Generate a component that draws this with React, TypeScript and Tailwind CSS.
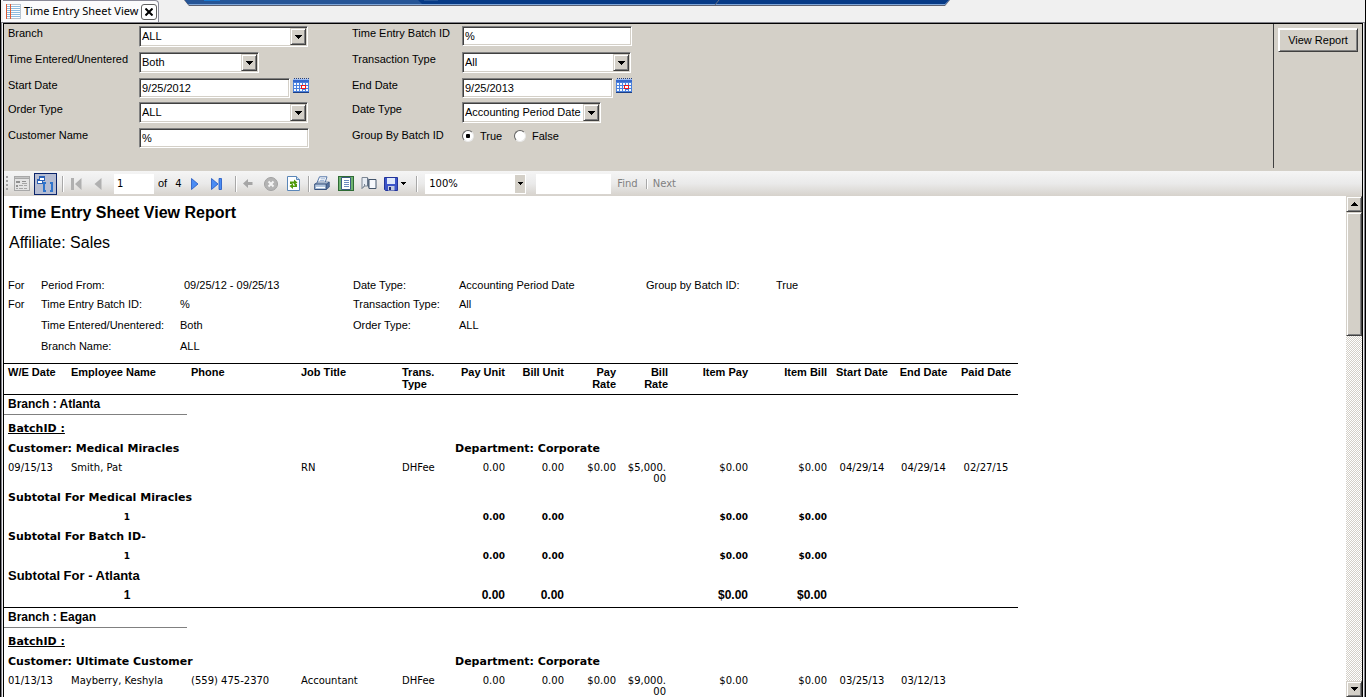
import { Fragment, useState } from 'react';
import type { ReactNode } from 'react';

// Classic raised / sunken 3D edges
const sunken =
  'border border-t-[#808080] border-l-[#808080] border-r-white border-b-white bg-white shadow-[inset_1px_1px_0_#404040,inset_-1px_-1px_0_#d4d0c8]';
const raised =
  'border border-t-[#d4d0c8] border-l-[#d4d0c8] border-r-[#404040] border-b-[#404040] bg-[#d4d0c8] shadow-[inset_1px_1px_0_#fff,inset_-1px_-1px_0_#808080]';

type Row = {
  date: string;
  name: string;
  phone: string;
  title: string;
  type: string;
  payUnit: string;
  billUnit: string;
  payRate: string;
  billRate: string;
  itemPay: string;
  itemBill: string;
  start: string;
  end: string;
  paid: string;
};

type Branch = {
  name: string;
  customer: string;
  department: string;
  rows: Row[];
  totals?: { count: number; units: string; amount: string };
};

const branches: Branch[] = [
  {
    name: 'Atlanta',
    customer: 'Medical Miracles',
    department: 'Corporate',
    rows: [
      {
        date: '09/15/13', name: 'Smith, Pat', phone: '', title: 'RN', type: 'DHFee',
        payUnit: '0.00', billUnit: '0.00', payRate: '$0.00', billRate: '$5,000.00',
        itemPay: '$0.00', itemBill: '$0.00', start: '04/29/14', end: '04/29/14', paid: '02/27/15',
      },
    ],
    totals: { count: 1, units: '0.00', amount: '$0.00' },
  },
  {
    name: 'Eagan',
    customer: 'Ultimate Customer',
    department: 'Corporate',
    rows: [
      {
        date: '01/13/13', name: 'Mayberry, Keshyla', phone: '(559) 475-2370', title: 'Accountant', type: 'DHFee',
        payUnit: '0.00', billUnit: '0.00', payRate: '$0.00', billRate: '$9,000.00',
        itemPay: '$0.00', itemBill: '$0.00', start: '03/25/13', end: '03/12/13', paid: '',
      },
    ],
  },
];

function Arrow({ up = false }: { up?: boolean }) {
  return (
    <svg width="7" height="4" viewBox="0 0 7 4" shapeRendering="crispEdges" aria-hidden="true">
      <path d={up ? 'M3 0h1v1h1v1h1v1h1v1H0V3h1V2h1V1h1z' : 'M0 0h7v1H6v1H5v1H4v1H3V3H2V2H1V1H0z'} fill="#000" />
    </svg>
  );
}

function Field({ id, label, children }: { id: string; label: string; children: ReactNode }) {
  return (
    <>
      <label htmlFor={id} className="leading-[14px]">{label}</label>
      <div className="flex items-start gap-[3px]">{children}</div>
    </>
  );
}

function Select({ id, options, width }: { id: string; options: string[]; width: string }) {
  return (
    <div className={`relative h-[21px] ${width} ${sunken}`}>
      <select id={id} className="h-full w-full appearance-none bg-transparent pl-0.5 pr-4 outline-none">
        {options.map((o) => (
          <option key={o}>{o}</option>
        ))}
      </select>
      <span className={`pointer-events-none absolute top-px right-px bottom-px flex w-4 items-center justify-center ${raised}`}>
        <Arrow />
      </span>
    </div>
  );
}

function TextBox({ id, value, width }: { id: string; value: string; width: string }) {
  return <input id={id} type="text" defaultValue={value} className={`h-5 pl-0.5 outline-none ${width} ${sunken}`} />;
}

function CalendarButton({ label }: { label: string }) {
  return (
    <button type="button" aria-label={label}>
      <svg width="16" height="15" viewBox="0 0 16 15" shapeRendering="crispEdges">
        <rect y="1" width="16" height="14" fill="#4a80dc" />
        <path d="M1 0h1v1H1zM3 0h1v1H3zM5 0h1v1H5zM7 0h1v1H7zM9 0h1v1H9zM11 0h1v1h-1zM13 0h1v1h-1zM15 0h1v1h-1z" fill="#26407c" />
        <rect y="1" width="16" height="1" fill="#9dbdf4" />
        <rect y="2" width="16" height="2" fill="#3568cc" />
        <path
          d="M1 5h2v2H1zM4 5h2v2H4zM7 5h2v2H7zM10 5h2v2h-2zM13 5h2v2h-2zM1 8h2v2H1zM4 8h2v2H4zM7 8h1v2H7zM13 8h2v2h-2zM1 11h2v2H1zM4 11h2v2H4zM7 11h2v2H7zM10 12h2v1h-2zM13 11h2v2h-2z"
          fill="#f4f9ff"
        />
        <path d="M8 7h5v4H8z" fill="#f01818" />
        <path d="M9 8h3v2H9z" fill="#fff" />
        <path d="M0 14h16v1H0z" fill="#1c3f86" />
      </svg>
    </button>
  );
}

function Tab() {
  return (
    <div className="flex h-full w-[156px] items-center rounded-tr border-t border-r border-[#8a8a98] bg-[#fbfbfc] pl-[3px]">
      <svg width="15" height="15" viewBox="0 0 15 15" shapeRendering="crispEdges" aria-hidden="true">
        <rect width="15" height="15" fill="#fff" />
        <path
          d="M0 2h15v1H0zM0 4h15v1H0zM0 6h15v1H0zM0 8h15v1H0zM0 10h15v1H0zM0 12h15v1H0z"
          fill="#8dbce0"
        />
        <path d="M0 0h15v1H0zM0 14h15v1H0zM14 0h1v15h-1z" fill="#b8c4d0" />
        <path d="M0 0h1v15H0zM4 0h1v15H4z" fill="#dd5a34" />
      </svg>
      <span className="ml-[3px] font-['Noto_Sans',sans-serif] text-[11px] whitespace-nowrap">Time Entry Sheet View</span>
      <button
        type="button"
        aria-label="Close tab"
        className="ml-[3px] flex size-4 shrink-0 items-center justify-center rounded-[3px] border border-[#606060] bg-white"
      >
        <svg width="8" height="8" viewBox="0 0 8 8">
          <path d="M.5.5l7 7M7.5.5l-7 7" stroke="#000" strokeWidth="2" />
        </svg>
      </button>
    </div>
  );
}

function TopStrip() {
  return (
    <svg width="766" height="6" viewBox="0 0 766 6" className="ml-[25px] self-start" aria-hidden="true">
      <path d="M0 0h766l-5 6H5z" fill="#5a5f70" />
      <path d="M1 0h764l-4 5H5z" fill="#7fa6d8" />
      <path d="M1 0h764l-4 4H4z" fill="#063a86" />
      <path d="M1 0h233l4 4H4z" fill="#265596" />
      <path d="M20 0h16v1H20z" fill="#1a78d0" />
      <path d="M240 0h14v1h-14z" fill="#265596" />
      <path d="M535 0l-4 5" stroke="#6a7080" />
    </svg>
  );
}

function Parameters() {
  const [grouped, setGrouped] = useState(true);
  return (
    <form className="flex h-[147px] bg-[#d4d0c8]" onSubmit={(e) => e.preventDefault()}>
      <div className="grid flex-1 auto-rows-min grid-cols-[131px_213px_110px_1fr] grid-rows-[26px_26px_24px_26px_20px] pt-0.5 pl-1">
        <Field id="branch" label="Branch">
          <Select id="branch" options={['ALL']} width="w-[169px]" />
        </Field>
        <Field id="batch" label="Time Entry Batch ID">
          <TextBox id="batch" value="%" width="w-[170px]" />
        </Field>
        <Field id="entered" label="Time Entered/Unentered">
          <Select id="entered" options={['Both']} width="w-[120px]" />
        </Field>
        <Field id="trans" label="Transaction Type">
          <Select id="trans" options={['All']} width="w-[169px]" />
        </Field>
        <Field id="start" label="Start Date">
          <TextBox id="start" value="9/25/2012" width="w-[151px]" />
          <CalendarButton label="Pick start date" />
        </Field>
        <Field id="end" label="End Date">
          <TextBox id="end" value="9/25/2013" width="w-[151px]" />
          <CalendarButton label="Pick end date" />
        </Field>
        <Field id="order" label="Order Type">
          <Select id="order" options={['ALL']} width="w-[169px]" />
        </Field>
        <Field id="datetype" label="Date Type">
          <Select id="datetype" options={['Accounting Period Date']} width="w-[139px]" />
        </Field>
        <Field id="customer" label="Customer Name">
          <TextBox id="customer" value="%" width="w-[170px]" />
        </Field>
        <Field id="group-true" label="Group By Batch ID">
          {[true, false].map((value) => (
            <label key={String(value)} className="flex w-[49px] items-center gap-1.5">
              <input
                id={value ? 'group-true' : 'group-false'}
                type="radio"
                name="group"
                checked={grouped === value}
                onChange={() => setGrouped(value)}
                className="size-3 shrink-0 appearance-none rounded-full border border-t-[#606060] border-r-[#e8e8e8] border-b-[#e8e8e8] border-l-[#606060] bg-white checked:bg-[radial-gradient(circle,#000_2px,#fff_2.5px)]"
              />
              {value ? 'True' : 'False'}
            </label>
          ))}
        </Field>
      </div>
      <div className="mb-[3px] border-l border-[#404040] pt-1 pr-1 pl-1">
        <button type="submit" className={`h-6 w-20 ${raised} border-t-white border-l-white`}>
          View Report
        </button>
      </div>
    </form>
  );
}

function Separator() {
  return <span className="h-4 w-0.5 shrink-0 border-l border-[#a8a8a8] bg-white" />;
}

function ToolButton({ label, className = '', children }: { label: string; className?: string; children: ReactNode }) {
  return (
    <button type="button" aria-label={label} className={`flex shrink-0 items-center justify-center ${className}`}>
      {children}
    </button>
  );
}

function Toolbar() {
  return (
    <div className="flex h-[25px] items-center bg-linear-to-b from-[#f5f5f5] via-[#eaeaea] to-[#d6d2cc] pl-0.5 font-['DejaVu_Sans','Liberation_Sans',sans-serif] text-[10px]">
      <svg width="3" height="15" viewBox="0 0 3 15" shapeRendering="crispEdges" aria-hidden="true">
        <path d="M0 0h2v2H0zM0 4h2v2H0zM0 8h2v2H0zM0 12h2v2H0z" fill="#a4a4a4" />
      </svg>

      <ToolButton label="Show or hide parameters" className="ml-[5px]">
        <svg width="16" height="15" viewBox="0 0 16 15" shapeRendering="crispEdges">
          <path d="M0 0h16v15H0z" fill="#a8a8a8" />
          <path d="M1 3h14v11H1z" fill="#e4e4e4" />
          <path d="M1 1h14v1H1z" fill="#c4c4c4" />
          <path d="M2 5h4v2H2zM2 9h2v2H2zM8 5h4v1H8z" fill="#909090" />
          <path d="M5 9h4v1H5zM10 9h3v1h-3zM5 12h4v1H5zM10 12h3v1h-3zM2 12h2v1H2zM8 7h5v1H8z" fill="#a6a6a6" />
        </svg>
      </ToolButton>
      <ToolButton label="Document map" className="ml-1 h-[22px] w-[23px] border border-[#0a246a] bg-[#b6bdd2]">
        <svg width="17" height="16" viewBox="0 0 17 16" shapeRendering="crispEdges">
          <path d="M2 0h6v5H2zM0 3h6v5H0z" fill="#2c62b8" />
          <path d="M3 2h4v2H3zM1 5h4v2H1z" fill="#fff" />
          <path d="M6 6h3v2H8v6h1v2H6zM13 6h3v10h-3v-2h1V8h-1z" fill="#2f74cc" />
        </svg>
      </ToolButton>
      <span className="w-[5px]" />
      <Separator />

      <ToolButton label="First page" className="ml-[7px]">
        <svg width="11" height="12" viewBox="0 0 11 12">
          <path d="M0 0h3v12H0zM10.5 0v12L4 6z" fill="#b0b0b0" />
        </svg>
      </ToolButton>
      <ToolButton label="Previous page" className="ml-3">
        <svg width="8" height="12" viewBox="0 0 8 12">
          <path d="M7.5 0v12L.5 6z" fill="#b0b0b0" />
        </svg>
      </ToolButton>
      <input aria-label="Current page" defaultValue="1" className="ml-3 h-5 w-10 bg-white pl-[3px] outline-none" />
      <span className="ml-1 font-['Liberation_Sans',sans-serif] text-[11px]">of</span>
      <span className="ml-2 w-2">4</span>
      <ToolButton label="Next page" className="ml-2">
        <svg width="8" height="12" viewBox="0 0 8 12">
          <path d="M.5.5v11L7 6z" fill="#4a8cf4" stroke="#1f56c0" strokeWidth=".8" />
        </svg>
      </ToolButton>
      <ToolButton label="Last page" className="ml-3">
        <svg width="11" height="12" viewBox="0 0 11 12">
          <path d="M.5.5v11L7 6zM8 .5h2.5v11H8z" fill="#4a8cf4" stroke="#1f56c0" strokeWidth=".8" />
        </svg>
      </ToolButton>
      <span className="w-[13px]" />
      <Separator />

      <ToolButton label="Back to parent report" className="ml-1.5">
        <svg width="10" height="9" viewBox="0 0 10 9">
          <path d="M0 4.500L5 0v3h4.500v3H5v3z" fill="#a6a6a6" />
        </svg>
      </ToolButton>
      <ToolButton label="Stop rendering" className="ml-[11px]">
        <svg width="14" height="14" viewBox="0 0 14 14">
          <circle cx="7" cy="7" r="6.5" fill="#b4b4b4" stroke="#a2a2a2" />
          <path d="M4.500 4.500l5 5M9.500 4.500l-5 5" stroke="#f4f4f4" strokeWidth="2" />
        </svg>
      </ToolButton>
      <ToolButton label="Refresh" className="ml-[9px]">
        <svg width="13" height="15" viewBox="0 0 13 15">
          <path d="M.5.5h9l3 3v11H.5z" fill="#fdfeff" stroke="#5a86b8" />
          <path d="M9.500.5v3h3" fill="#c8dcf0" stroke="#5a86b8" />
          <path d="M3 8V5.500h4V3.500L10.500 6.500 7 9V7.500H5V8zM10 8v3H6v2L2.500 10 6 7.500V9.500h2V8z" fill="#4f9a08" />
        </svg>
      </ToolButton>
      <span className="w-2" />
      <Separator />

      <ToolButton label="Print" className="ml-1">
        <svg width="16" height="15" viewBox="0 0 16 15">
          <path d="M5.500.8h7.500l-2 6H3z" fill="#fff" stroke="#5577a8" />
          <path d="M6.500 2.800h4.500M5.800 4.600h4.500" stroke="#9ab2d4" />
          <path d="M1 8l3-2h11l-2 2z" fill="#d8e2ee" stroke="#46618c" strokeWidth=".7" />
          <path d="M.7 8h11.600v5.500H.7z" fill="#b4c8e0" stroke="#36507c" />
          <path d="M12.300 8L15.300 6v5l-3 2.500z" fill="#55719c" stroke="#36507c" strokeWidth=".7" />
          <path d="M2 11.500h9" stroke="#fff" />
        </svg>
      </ToolButton>
      <ToolButton label="Print layout" className="ml-2">
        <svg width="16" height="15" viewBox="0 0 16 15">
          <rect x=".5" y=".5" width="15" height="14" fill="#6fb470" stroke="#2e6b34" />
          <path d="M3.500 1.500h9v12h-9z" fill="#fff" stroke="#3a5a80" />
          <path d="M6 4.500h5M6 6.500h5M6 8.500h5M6 10.500h5" stroke="#6d8cc0" />
        </svg>
      </ToolButton>
      <ToolButton label="Page setup" className="ml-[7px]">
        <svg width="16" height="13" viewBox="0 0 16 13">
          <path d="M1 .5h5.500v8.500H3.500L1 11.500z" fill="#e8edf4" stroke="#7c8794" />
          <path d="M1 11.500l2.500-2.500v-2" fill="none" stroke="#7c8794" />
          <path d="M8 2.500h7v9H8z" fill="#f6f9fd" stroke="#44566c" />
          <path d="M6.500.5L8 2.500v9L6.500 9z" fill="#56687e" />
        </svg>
      </ToolButton>
      <ToolButton label="Export" className="ml-[7px] gap-[3px]">
        <svg width="14" height="14" viewBox="0 0 14 14">
          <path d="M.5.5h13v13h-12l-1-1z" fill="#3c55c8" stroke="#22349a" />
          <path d="M3 1h8v6H3z" fill="#dfe9fb" />
          <path d="M4 9h6.500v4.500H4z" fill="#c2cbe0" />
          <path d="M5 10h2v3H5z" fill="#1e2c78" />
        </svg>
        <svg width="5" height="3" viewBox="0 0 5 3" shapeRendering="crispEdges">
          <path d="M0 0h5v1H4v1H3v1H2V2H1V1H0z" />
        </svg>
      </ToolButton>
      <span className="w-2.5" />
      <Separator />

      <div className="relative ml-[7px] h-5 w-[101px] bg-white">
        <select aria-label="Zoom" className="h-full w-full appearance-none bg-transparent pl-1 outline-none">
          <option>100%</option>
        </select>
        <span className="pointer-events-none absolute top-px right-px bottom-px flex w-2.5 items-center justify-center bg-[#d4d0c8]">
          <svg width="5" height="3" viewBox="0 0 5 3" shapeRendering="crispEdges">
            <path d="M0 0h5v1H4v1H3v1H2V2H1V1H0z" />
          </svg>
        </span>
      </div>
      <input aria-label="Find text" className="ml-2.5 h-5 w-[75px] bg-white px-1 outline-none" />
      <button type="button" className="mr-2 ml-1.5 text-[#808080]">Find</button>
      <span className="h-2.5 w-0.5 border-l border-[#a8a8a8] bg-white" />
      <button type="button" className="ml-[5px] text-[#808080]">Next</button>
    </div>
  );
}

function Summary() {
  return (
    <div className="grid grid-cols-[33px_139px_173px_106px_187px_130px_1fr] grid-rows-[19px_21px_21px_21px] pt-[23px] pb-[5px] pl-1 leading-[19px]">
      <span>For</span>
      <span>Period From:</span>
      <span className="pl-1">09/25/12 - 09/25/13</span>
      <span>Date Type:</span>
      <span>Accounting Period Date</span>
      <span>Group by Batch ID:</span>
      <span>True</span>

      <span>For</span>
      <span>Time Entry Batch ID:</span>
      <span>%</span>
      <span>Transaction Type:</span>
      <span className="col-span-3">All</span>

      <span className="col-start-2">Time Entered/Unentered:</span>
      <span>Both</span>
      <span>Order Type:</span>
      <span className="col-span-3">ALL</span>

      <span className="col-start-2">Branch Name:</span>
      <span>ALL</span>
    </div>
  );
}

type SubtotalProps = { label: string; totals: NonNullable<Branch['totals']>; big?: boolean };

function Subtotal({ label, totals, big = false }: SubtotalProps) {
  return (
    <>
      <tr className="h-5 font-bold">
        <td colSpan={14} className={`pl-1 ${big ? "font-['Liberation_Sans',sans-serif] text-[13px]" : 'text-[11px]'}`}>{label}</td>
      </tr>
      <tr className={`h-[19px] font-bold ${big ? "font-['Liberation_Sans',sans-serif] text-[12px]" : 'text-[9px]'}`}>
        <td />
        <td className="text-center">{totals.count}</td>
        <td colSpan={3} />
        <td className="pr-1 text-right">{totals.units}</td>
        <td className="pr-1 text-right">{totals.units}</td>
        <td colSpan={2} />
        <td className="pr-1 text-right">{totals.amount}</td>
        <td className="pr-1 text-right">{totals.amount}</td>
        <td colSpan={3} />
      </tr>
    </>
  );
}

function ReportTable() {
  return (
    <table className="w-[1014px] table-fixed border-collapse font-['DejaVu_Sans',sans-serif] leading-[14px]">
      <colgroup>
        <col className="w-[63px]" />
        <col className="w-[120px]" />
        <col className="w-[110px]" />
        <col className="w-[101px]" />
        <col className="w-[53px]" />
        <col className="w-[58px]" />
        <col className="w-[59px]" />
        <col className="w-[52px]" />
        <col className="w-[52px]" />
        <col className="w-[80px]" />
        <col className="w-[79px]" />
        <col className="w-[62px]" />
        <col className="w-[61px]" />
        <col className="w-[64px]" />
      </colgroup>
      <thead>
        <tr className="h-[31px] border-y border-black text-left align-top font-['Liberation_Sans',sans-serif] text-[11px] leading-3 *:pt-0.5">
          <th className="pl-1 whitespace-nowrap">W/E Date</th>
          <th className="pl-1">Employee Name</th>
          <th className="pl-1">Phone</th>
          <th className="pl-1">Job Title</th>
          <th className="pl-1">Trans. Type</th>
          <th className="pr-1 text-right">Pay Unit</th>
          <th className="pr-1 text-right">Bill Unit</th>
          <th className="pr-1 pl-5 text-right">Pay Rate</th>
          <th className="pr-1 pl-5 text-right">Bill Rate</th>
          <th className="pr-1 text-right">Item Pay</th>
          <th className="pr-1 text-right">Item Bill</th>
          <th className="text-center">Start Date</th>
          <th className="text-center">End Date</th>
          <th className="text-center">Paid Date</th>
        </tr>
      </thead>
      <tbody>
        {branches.map((b) => (
          <Fragment key={b.name}>
            <tr className="h-5 font-['Liberation_Sans',sans-serif] text-[12px] font-bold">
              <td colSpan={2} className="border-b border-[#808080] pb-0.5 pl-1">Branch : {b.name}</td>
              <td colSpan={12} />
            </tr>
            <tr className="h-6 text-[11px] font-bold">
              <td colSpan={14} className="pt-1 pl-1 underline">BatchID :</td>
            </tr>
            <tr className="h-5 text-[11px] font-bold">
              <td colSpan={5} className="pl-1">Customer: {b.customer}</td>
              <td colSpan={9} className="pl-1">Department: {b.department}</td>
            </tr>
            {b.rows.map((r) => (
              <tr key={r.date + r.name} className="h-[29px] align-top text-[10px] leading-[11px] *:pt-[3px]">
                <td className="pl-1">{r.date}</td>
                <td className="pl-1">{r.name}</td>
                <td className="pl-1">{r.phone}</td>
                <td className="pl-1">{r.title}</td>
                <td className="pl-1">{r.type}</td>
                <td className="pr-1 text-right">{r.payUnit}</td>
                <td className="pr-1 text-right">{r.billUnit}</td>
                <td className="pr-1 text-right">{r.payRate}</td>
                <td className="pr-1.5 pl-1.5 text-right break-all">{r.billRate}</td>
                <td className="pr-1 text-right">{r.itemPay}</td>
                <td className="pr-1 text-right">{r.itemBill}</td>
                <td className="text-center">{r.start}</td>
                <td className="text-center">{r.end}</td>
                <td className="text-center">{r.paid}</td>
              </tr>
            ))}
            {b.totals && (
              <>
                <Subtotal label={`Subtotal For ${b.customer}`} totals={b.totals} />
                <Subtotal label="Subtotal For Batch ID-" totals={b.totals} />
                <Subtotal label={`Subtotal For - ${b.name}`} totals={b.totals} big />
                <tr className="border-b border-black">
                  <td colSpan={14} className="h-[3px]" />
                </tr>
              </>
            )}
          </Fragment>
        ))}
      </tbody>
    </table>
  );
}

function ScrollBar() {
  return (
    <div className="flex w-4 shrink-0 flex-col bg-[repeating-conic-gradient(#d4d0c8_0_25%,#fff_0_50%)] bg-size-[2px_2px]">
      <button type="button" aria-label="Scroll up" className={`flex h-4 shrink-0 items-center justify-center ${raised}`}>
        <Arrow up />
      </button>
      <div className={`h-[124px] shrink-0 ${raised}`} />
      <div className="flex-1" />
      <button type="button" aria-label="Scroll down" className={`flex h-4 shrink-0 items-center justify-center ${raised}`}>
        <Arrow />
      </button>
    </div>
  );
}

export default function App() {
  return (
    <div className="flex h-screen flex-col overflow-hidden border-x border-black bg-[#f0f0f0] font-['Liberation_Sans',Arial,sans-serif] text-[11px] text-black">
      <header className="flex h-[22px] shrink-0 pl-0.5">
        <Tab />
        <TopStrip />
      </header>
      <div className="flex min-h-0 flex-1 flex-col border-t border-r border-l border-[#808088] px-px">
        <div className="flex min-h-0 flex-1 flex-col border-x border-t border-black">
          <Parameters />
          <Toolbar />
          <div className="flex min-h-0 flex-1 bg-white">
            <main className="min-w-0 flex-1 overflow-hidden">
              <h1 className="pt-[7px] pl-[5px] text-[16px] leading-5 font-bold">Time Entry Sheet View Report</h1>
              <p className="pt-2.5 pl-[5px] text-[16px] leading-5">Affiliate: Sales</p>
              <Summary />
              <ReportTable />
            </main>
            <ScrollBar />
          </div>
        </div>
      </div>
    </div>
  );
}
